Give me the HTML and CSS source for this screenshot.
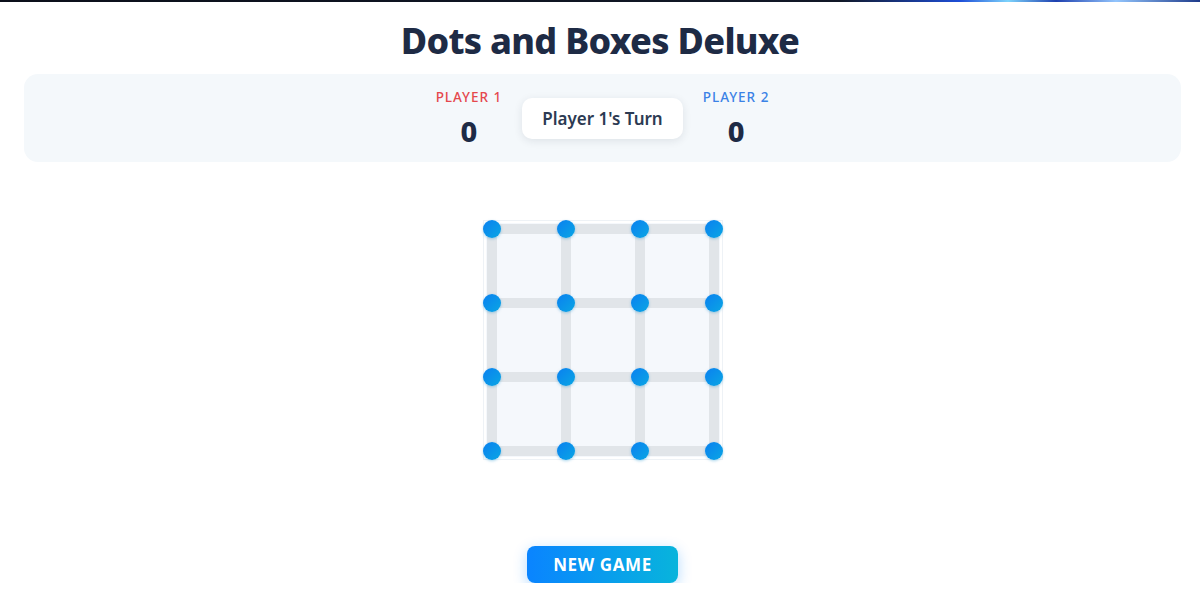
FILE: index.html
```html
<!DOCTYPE html>
<html lang="en">
<head>
  <meta charset="UTF-8" />
  <title>Dots and Boxes Deluxe</title>
  <link rel="stylesheet" href="styles.css">
</head>
<body>
  <div class="top-strip"></div>
  <h1>Dots and Boxes Deluxe</h1>
  <div class="container">
    <!-- SCOREBOARD -->
    <section class="scoreboard">
      <div class="player p1">
        <span class="label">Player 1</span>
        <span class="score" id="score-1">0</span>
      </div>
      <div class="turn" id="turn">Player 1's Turn</div>
      <div class="player p2">
        <span class="label">Player 2</span>
        <span class="score" id="score-2">0</span>
      </div>
    </section>

    <!-- BOARD -->
    <div class="board-wrap">
      <div class="board" id="board"></div>
    </div>

    <button class="new-game" id="new-game">New Game</button>
  </div>

  <script>
    const SIZE = 4; // dots per side
    const board = document.getElementById("board");

    const build = () => {
      board.innerHTML = "";
      for (let r = 0; r < SIZE * 2 - 1; r++) {
        for (let c = 0; c < SIZE * 2 - 1; c++) {
          const el = document.createElement("div");
          if (r % 2 === 0 && c % 2 === 0) el.className = "dot";
          else if (r % 2 === 0) el.className = "line h";
          else if (c % 2 === 0) el.className = "line v";
          else el.className = "cell";
          board.appendChild(el);
        }
      }
    };
    build();

    document.getElementById("new-game").addEventListener("click", build);
  </script>
</body>
</html>
```

FILE: styles.css
```css
:root {
  --ink: #1e2b45;
  --red: #e5484d;
  --blue: #3b82e6;
  --line: #e1e5e9;
  --panel: #f4f8fb;
  --dot: 18px;
  --gap: 56px;
}
* {
  box-sizing: border-box;
  margin: 0;
  padding: 0;
}
body {
  font-family: "Noto Sans", "Open Sans", sans-serif;
  background: #fff;
  color: var(--ink);
}
.top-strip {
  height: 2px;
  background: linear-gradient(
    90deg,
    #0b0f1a 0%,
    #111827 70%,
    #1d4ed8 80%,
    #7dd3fc 84%,
    #1e40af 88%,
    #93c5fd 93%,
    #1e3a8a 100%
  );
}
h1 {
  text-align: center;
  font-size: 36px;
  font-weight: 800;
  line-height: 1;
  letter-spacing: -0.7px;
  margin: 21px 0 15px;
}
.container {
  padding: 0 19px 0 24px;
}

/* SCOREBOARD */
.scoreboard {
  display: flex;
  justify-content: center;
  align-items: center;
  gap: 20px;
  height: 88px;
  background: var(--panel);
  border-radius: 14px;
}
.player {
  display: flex;
  flex-direction: column;
  align-items: center;
}
.label {
  font-size: 13.5px;
  font-weight: 500;
  text-transform: uppercase;
  letter-spacing: 1px;
  line-height: 18px;
  white-space: nowrap;
}
.p1 .label {
  color: var(--red);
}
.p2 .label {
  color: var(--blue);
}
.score {
  font-size: 29px;
  font-weight: 800;
  line-height: 34px;
  margin-top: 8px;
}
.turn {
  background: #fff;
  border-radius: 10px;
  padding: 0 20px;
  height: 41px;
  line-height: 41px;
  font-size: 17px;
  font-weight: 600;
  color: #2c3a52;
  box-shadow: 0 2px 8px rgba(30, 41, 59, 0.1);
}

/* BOARD */
.board-wrap {
  display: flex;
  justify-content: center;
  margin-top: 58px;
}
.board {
  display: grid;
  grid-template-columns: var(--dot) var(--gap) var(--dot) var(--gap) var(--dot) var(--gap) var(--dot);
  grid-template-rows: var(--dot) var(--gap) var(--dot) var(--gap) var(--dot) var(--gap) var(--dot);
  background: linear-gradient(#f5f8fc, #f5f8fc) 3px 3px / calc(100% - 6px) calc(100% - 6px) no-repeat;
  box-shadow: 0 0 0 1px #eef2f6 inset;
}
.dot {
  position: relative;
  z-index: 2;
  width: var(--dot);
  height: var(--dot);
  border-radius: 50%;
  background: linear-gradient(135deg, #0a80f0, #0aa6e4);
  box-shadow: 0 1px 3px rgba(2, 132, 199, 0.35);
}
.line {
  background: var(--line);
  cursor: pointer;
}
.line.h {
  height: 10px;
  align-self: center;
  margin: 0 -4px;
}
.line.v {
  width: 10px;
  justify-self: center;
  margin: -4px 0;
}
.cell {
  background: #f5f8fc;
}

/* BUTTON */
.new-game {
  display: block;
  margin: 86px auto 0;
  padding: 0 26px;
  height: 37px;
  border: none;
  border-radius: 8px;
  background: linear-gradient(90deg, #0a84ff, #08b4dc);
  color: #fff;
  font-family: inherit;
  font-size: 17px;
  font-weight: 700;
  letter-spacing: 0.6px;
  text-transform: uppercase;
  box-shadow: 0 4px 14px rgba(10, 132, 255, 0.3);
  cursor: pointer;
}
```
